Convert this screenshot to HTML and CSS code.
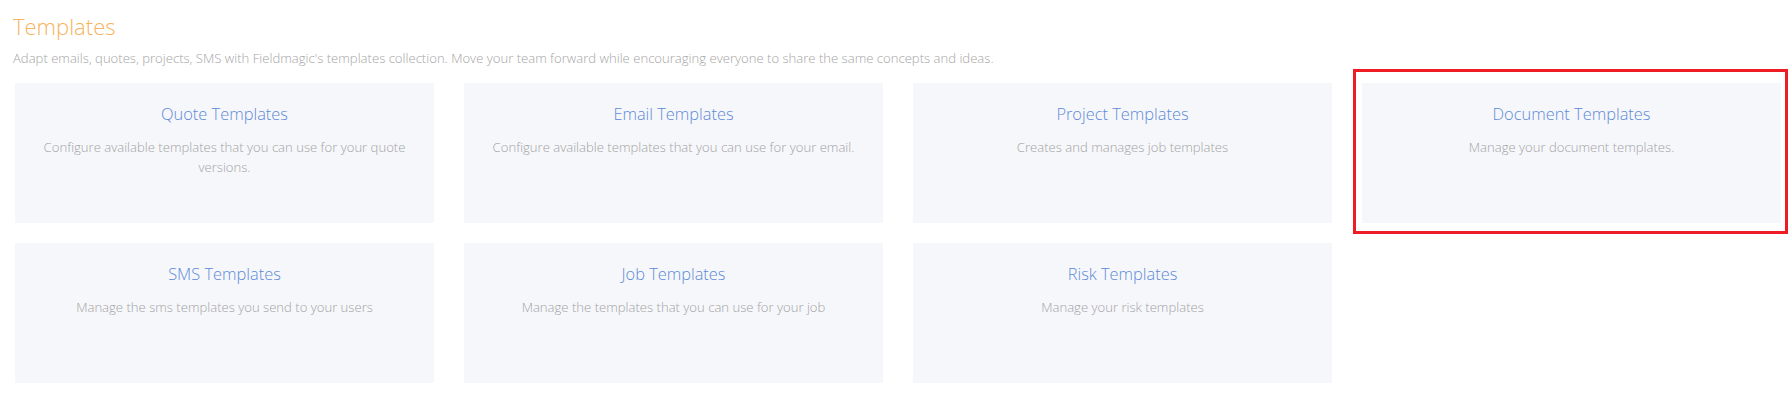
FILE: index.html
```html
<!DOCTYPE html>
<html>
<head>
<meta charset="utf-8">
<link rel="stylesheet" href="styles.css">
</head>
<body>
<div class="page">
  <header class="header">
    <h1 class="title">Templates</h1>
    <p class="subtitle">Adapt emails, quotes, projects, SMS with Fieldmagic's templates collection. Move your team forward while encouraging everyone to share the same concepts and ideas.</p>
  </header>
  <div class="grid">
    <div class="card">
      <div class="card-title">Quote Templates</div>
      <div class="card-desc">Configure available templates that you can use for your quote versions.</div>
    </div>
    <div class="card">
      <div class="card-title">Email Templates</div>
      <div class="card-desc">Configure available templates that you can use for your email.</div>
    </div>
    <div class="card">
      <div class="card-title">Project Templates</div>
      <div class="card-desc">Creates and manages job templates</div>
    </div>
    <div class="card card-highlight">
      <div class="card-title">Document Templates</div>
      <div class="card-desc">Manage your document templates.</div>
      <span class="highlight-box"></span>
    </div>
    <div class="card">
      <div class="card-title">SMS Templates</div>
      <div class="card-desc">Manage the sms templates you send to your users</div>
    </div>
    <div class="card">
      <div class="card-title">Job Templates</div>
      <div class="card-desc">Manage the templates that you can use for your job</div>
    </div>
    <div class="card">
      <div class="card-title">Risk Templates</div>
      <div class="card-desc">Manage your risk templates</div>
    </div>
  </div>
</div>
</body>
</html>
```

FILE: styles.css
```css
html, body {
  margin: 0;
  padding: 0;
  background: #ffffff;
}

body {
  font-family: "Open Sans", "Noto Sans", sans-serif;
  font-weight: 300;
}

.page {
  padding: 0 11px 0 0;
}

.header {
  padding-left: 13px;
}

.title {
  margin: 0;
  padding-top: 11px;
  font-size: 22px;
  line-height: 30px;
  font-weight: 300;
  color: #f6b35c;
}

.subtitle {
  margin: 8px 0 0 0;
  font-size: 13.1px;
  line-height: 18px;
  color: #a5a5a5;
}

.grid {
  display: grid;
  grid-template-columns: repeat(4, 419px);
  column-gap: 30px;
  row-gap: 20px;
  padding-left: 15px;
  margin-top: 16px;
}

.card {
  position: relative;
  height: 140px;
  box-sizing: border-box;
  background: #f6f7fb;
  padding: 18px 18px 0;
  text-align: center;
}

.card-title {
  font-size: 16.4px;
  line-height: 26px;
  color: #5d8ad7;
}

.card-desc {
  margin-top: 10px;
  font-size: 13.1px;
  line-height: 20px;
  color: #a3a3a3;
}

.highlight-box {
  position: absolute;
  left: -9px;
  top: -14px;
  right: -7px;
  bottom: -11px;
  border: 3px solid #ee1c25;
  pointer-events: none;
}
```
